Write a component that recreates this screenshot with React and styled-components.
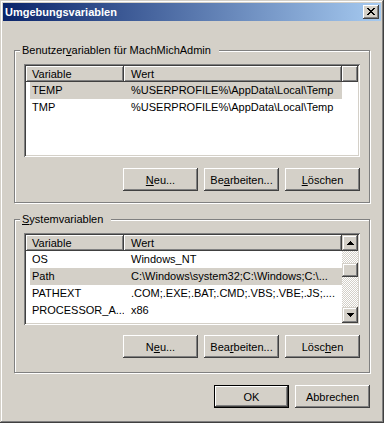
import React from "react";
import styled, { createGlobalStyle } from "styled-components";

const GlobalStyle = createGlobalStyle`
  html, body { margin: 0; padding: 0; }
  body {
    background: #ffffff;
    font-family: "Liberation Sans", Arial, sans-serif;
    font-size: 11px;
    color: #000000;
  }
  * { box-sizing: border-box; }
`;

const raised = `
  box-shadow: inset -1px -1px 0 #404040, inset 1px 1px 0 #ffffff,
    inset -2px -2px 0 #808080, inset 2px 2px 0 #d4d0c8;
`;

const Window = styled.div`
  width: 384px;
  height: 423px;
  padding: 3px;
  background: #d4d0c8;
  box-shadow: inset -1px -1px 0 #404040, inset 1px 1px 0 #d4d0c8,
    inset -2px -2px 0 #808080, inset 2px 2px 0 #ffffff;
  display: flex;
  flex-direction: column;
`;

const TitleBar = styled.div`
  height: 18px;
  flex: none;
  display: flex;
  align-items: center;
  justify-content: space-between;
  padding: 0 2px;
  background: linear-gradient(to right, #0a246a, #a6caf0);
`;

const Title = styled.span`
  color: #ffffff;
  font-weight: bold;
  font-size: 11px;
  line-height: 18px;
  white-space: nowrap;
`;

const CloseButton = styled.div`
  width: 16px;
  height: 14px;
  background: #d4d0c8;
  display: flex;
  justify-content: center;
  align-items: flex-start;
  padding-top: 3px;
  box-shadow: inset -1px -1px 0 #404040, inset 1px 1px 0 #ffffff,
    inset -2px -2px 0 #808080, inset 2px 2px 0 #d4d0c8;
`;

const Client = styled.div`
  flex: 1;
  display: flex;
  flex-direction: column;
  padding: 23px 11px 0;
`;

const Group = styled.fieldset`
  margin: ${(p) => p.$top}px 0 0;
  padding: 0;
  min-width: 0;
  border: 1px solid #808080;
  box-shadow: inset 1px 1px 0 #ffffff, 1px 1px 0 #ffffff;
`;

const Legend = styled.legend`
  margin-left: 5px;
  padding: 0 8px 0 2px;
  line-height: 13px;
  background: #d4d0c8;
  white-space: nowrap;
`;

const GroupBody = styled.div`
  padding: 7px 9px ${(p) => p.$bottom}px;
  display: flex;
  flex-direction: column;
  gap: ${(p) => p.$gap}px;
`;

const Key = styled.span`
  text-decoration: underline;
  text-underline-offset: 1px;
`;

const ListView = styled.div`
  height: ${(p) => p.$height}px;
  padding: 2px;
  background: #ffffff;
  display: flex;
  box-shadow: inset 1px 1px 0 #808080, inset -1px -1px 0 #ffffff,
    inset 2px 2px 0 #404040, inset -2px -2px 0 #d4d0c8;
`;

const ListContent = styled.div`
  flex: 1;
  min-width: 0;
  overflow: hidden;
  display: flex;
  flex-direction: column;
`;

const Header = styled.div`
  display: grid;
  grid-template-columns: 98px 218px 1fr;
  height: 16px;
  flex: none;
`;

const HeaderCell = styled.div`
  background: #d4d0c8;
  padding-left: ${(p) => p.$pad}px;
  line-height: 16px;
  white-space: nowrap;
  overflow: hidden;
  ${raised}
`;

const Row = styled.div`
  display: grid;
  grid-template-columns: 94px 218px;
  width: 312px;
  height: 17px;
  flex: none;
  margin-left: 4px;
  background: ${(p) => (p.$selected ? "#d4d0c8" : "transparent")};
`;

const Cell = styled.div`
  padding-left: ${(p) => p.$pad}px;
  line-height: 17px;
  white-space: nowrap;
  overflow: hidden;
`;

const ScrollBar = styled.div`
  width: 16px;
  flex: none;
  display: flex;
  flex-direction: column;
`;

const ArrowButton = styled.div`
  width: 16px;
  height: 16px;
  flex: none;
  background: #d4d0c8;
  display: flex;
  justify-content: center;
  align-items: center;
  box-shadow: inset -1px -1px 0 #404040, inset 1px 1px 0 #d4d0c8,
    inset -2px -2px 0 #808080, inset 2px 2px 0 #ffffff;
`;

const Track = styled.div`
  flex: 1;
  background: repeating-conic-gradient(#ffffff 0 25%, #d4d0c8 0 50%) 0 0 / 2px 2px;
`;

const Thumb = styled.div`
  width: 16px;
  height: 14px;
  margin-top: 12px;
  background: #d4d0c8;
  box-shadow: inset -1px -1px 0 #404040, inset 1px 1px 0 #d4d0c8,
    inset -2px -2px 0 #808080, inset 2px 2px 0 #ffffff;
`;

const ButtonRow = styled.div`
  display: flex;
  justify-content: flex-end;
  gap: 6px;
  margin-top: ${(p) => p.$top || 0}px;
`;

const Button = styled.div`
  width: 75px;
  height: 23px;
  background: #d4d0c8;
  display: flex;
  justify-content: center;
  align-items: center;
  white-space: nowrap;
  box-shadow: ${(p) =>
    p.$default
      ? "inset 0 0 0 1px #000000, inset -2px -2px 0 #404040, inset 2px 2px 0 #ffffff, inset -3px -3px 0 #808080"
      : "inset -1px -1px 0 #404040, inset 1px 1px 0 #ffffff, inset -2px -2px 0 #808080"};
`;

const Glyph = ({ w, h, d }) => (
  <svg width={w} height={h} viewBox={`0 0 ${w} ${h}`} shapeRendering="crispEdges">
    <path d={d} fill="#000000" />
  </svg>
);

const CLOSE_D =
  "M0 0h2v1h-2z M6 0h2v1h-2z M1 1h2v1h-2z M5 1h2v1h-2z M2 2h4v1h-4z M3 3h2v1h-2z M2 4h4v1h-4z M1 5h2v1h-2z M5 5h2v1h-2z M0 6h2v1h-2z M6 6h2v1h-2z";
const UP_D = "M3 0h1v1h-1z M2 1h3v1h-3z M1 2h5v1h-5z M0 3h7v1h-7z";
const DOWN_D = "M0 0h7v1h-7z M1 1h5v1h-5z M2 2h3v1h-3z M3 3h1v1h-1z";

const userVars = [
  { name: "TEMP", value: "%USERPROFILE%\\AppData\\Local\\Temp", selected: true },
  { name: "TMP", value: "%USERPROFILE%\\AppData\\Local\\Temp" },
];

const sysVars = [
  { name: "OS", value: "Windows_NT" },
  { name: "Path", value: "C:\\Windows\\system32;C:\\Windows;C:\\...", selected: true },
  { name: "PATHEXT", value: ".COM;.EXE;.BAT;.CMD;.VBS;.VBE;.JS;...." },
  { name: "PROCESSOR_A...", value: "x86" },
];

const Rows = ({ items }) =>
  items.map((v) => (
    <Row key={v.name} $selected={v.selected}>
      <Cell $pad={2}>{v.name}</Cell>
      <Cell $pad={7}>{v.value}</Cell>
    </Row>
  ));

export default function App() {
  return (
    <>
      <GlobalStyle />
      <Window>
        <TitleBar>
          <Title>Umgebungsvariablen</Title>
          <CloseButton>
            <Glyph w={8} h={7} d={CLOSE_D} />
          </CloseButton>
        </TitleBar>
        <Client>
          <Group $top={0}>
            <Legend>
              Benutzer<Key>v</Key>ariablen für MachMichAdmin
            </Legend>
            <GroupBody $bottom={11} $gap={11}>
              <ListView $height={93}>
                <ListContent>
                  <Header>
                    <HeaderCell $pad={6}>Variable</HeaderCell>
                    <HeaderCell $pad={7}>Wert</HeaderCell>
                    <HeaderCell $pad={0} />
                  </Header>
                  <Rows items={userVars} />
                </ListContent>
              </ListView>
              <ButtonRow>
                <Button>
                  <Key>N</Key>eu...
                </Button>
                <Button>
                  Be<Key>a</Key>rbeiten...
                </Button>
                <Button>
                  <Key>L</Key>öschen
                </Button>
              </ButtonRow>
            </GroupBody>
          </Group>
          <Group $top={10}>
            <Legend>
              <Key>S</Key>ystemvariablen
            </Legend>
            <GroupBody $bottom={14} $gap={10}>
              <ListView $height={92}>
                <ListContent>
                  <Header>
                    <HeaderCell $pad={6}>Variable</HeaderCell>
                    <HeaderCell $pad={7}>Wert</HeaderCell>
                  </Header>
                  <Rows items={sysVars} />
                </ListContent>
                <ScrollBar>
                  <ArrowButton>
                    <Glyph w={7} h={4} d={UP_D} />
                  </ArrowButton>
                  <Track>
                    <Thumb />
                  </Track>
                  <ArrowButton>
                    <Glyph w={7} h={4} d={DOWN_D} />
                  </ArrowButton>
                </ScrollBar>
              </ListView>
              <ButtonRow>
                <Button>
                  N<Key>e</Key>u...
                </Button>
                <Button>
                  Bea<Key>r</Key>beiten...
                </Button>
                <Button>
                  Lösc<Key>h</Key>en
                </Button>
              </ButtonRow>
            </GroupBody>
          </Group>
          <ButtonRow $top={12}>
            <Button $default>OK</Button>
            <Button>Abbrechen</Button>
          </ButtonRow>
        </Client>
      </Window>
    </>
  );
}
